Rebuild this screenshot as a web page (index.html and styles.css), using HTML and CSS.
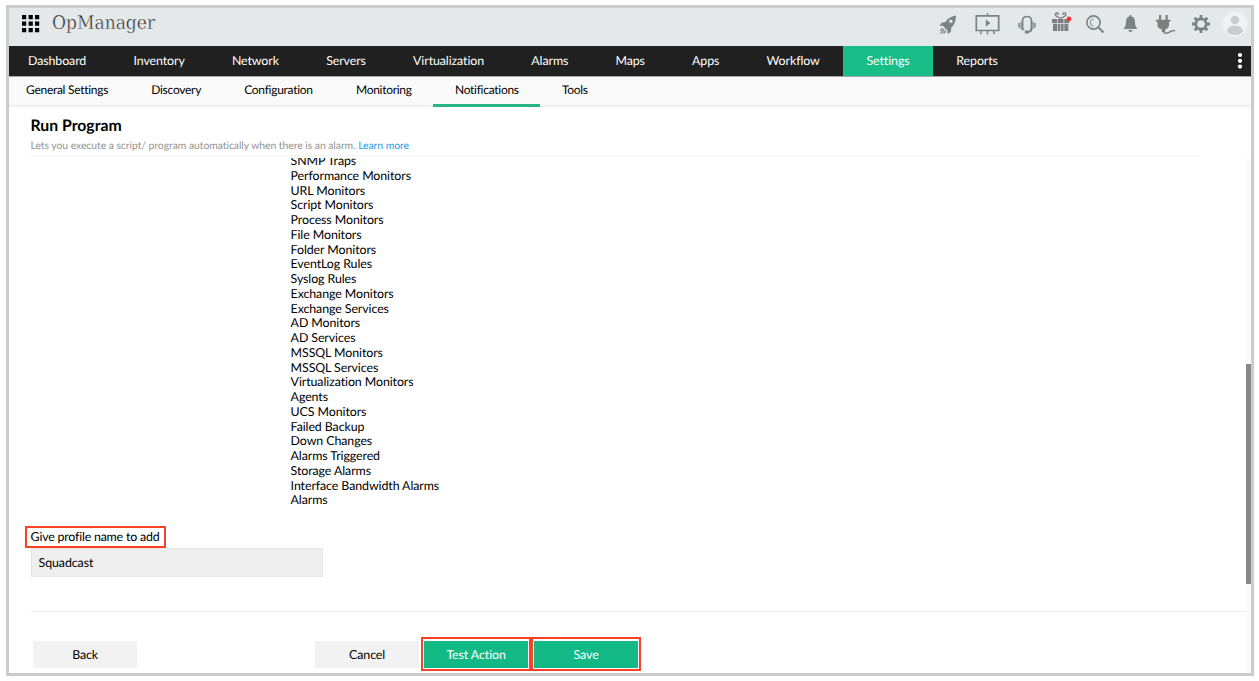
FILE: index.html
```html
<!DOCTYPE html>
<html lang="en">
<head>
<meta charset="utf-8">
<title>OpManager - Run Program</title>
<link rel="stylesheet" href="styles.css">
</head>
<body>
<div class="frame">
  <header class="topbar">
    <svg class="grid-icon" width="18" height="18" viewBox="0 0 18 18"><path d="M0 0h4.200v4.200H0zM6.600 0h4.200v4.200H6.600zM13 0h4.200v4.200H13zM0 6.500h4.200v4.200H0zM6.600 6.500h4.200v4.200H6.600zM13 6.500h4.200v4.200H13zM0 13h4.200v4.200H0zM6.600 13h4.200v4.200H6.600zM13 13h4.200v4.200H13z"/></svg>
    <span class="brand">OpManager</span>
    <div class="tools">
      <svg class="ic rocket" width="18" height="20" viewBox="0 0 18 20"><path fill="#7d8385" d="M17 0.500C12.500 1 8.500 3.500 6.500 7L2.500 7.800 0.500 11l3.300-.2 4.800 5-.1 3.200 3.300-2 .6-4.500C15.500 10 17 5.500 17 .5z"/><circle cx="11.800" cy="6.300" r="1.700" fill="#e5e8e9"/><path fill="none" stroke="#7d8385" stroke-width="1.300" d="M4 13.200l-2.800 2.600M5.500 14.500L1.500 18.500M7 16l-2.600 2.500"/></svg>
      <svg class="ic board" width="25" height="23" viewBox="0 0 25 23"><g fill="none" stroke="#7d8385"><path stroke-width="1.700" d="M1.300 2.900h22.400v14.600H1.300z"/><path stroke-width="1.500" d="M12.500 0v2M6.500 18l-1 3M12.500 18v3.500M18.500 18l1 3"/></g><path fill="#7d8385" d="M10.800 6.500l4.500 3.600-4.500 3.600z"/></svg>
      <svg class="ic headset" width="18" height="20" viewBox="0 0 18 20"><g fill="none" stroke="#7d8385" stroke-width="1.700"><path d="M6.200 14.500H4.600V5.500c0-2.700 1.700-4 4.400-4s4.400 1.300 4.400 4v9h-1.600M13.400 14.500c0 1.600-1.300 2.300-3.400 2.300"/><path stroke-width="1.500" d="M1 8v4.500M17 8v4.500"/><path stroke-width="1.200" d="M3 6.500v7.500M15 6.500v7.500"/></g><rect x="6.800" y="15.600" width="4" height="2.800" rx="1" fill="#7d8385"/></svg>
      <svg class="ic gift" width="20" height="21" viewBox="0 0 20 21"><g fill="#7d7f80"><path d="M0 7h5v4H0zM5.700 7h5.900v4H5.700zM12.300 7h5v4h-5zM1 11.700h4v7.300H1zM5.700 11.700h2.600v7.300H5.700zM9 11.700h2.600v7.300H9zM12.300 11.700h4v7.300h-4z"/></g><path fill="none" stroke="#7d7f80" stroke-width="1.500" d="M8.600 6.200C6 5.200 2.700 4 3.500 1.900 4.400.3 6.500 1 6.200 2.800M8.600 6.200c2.600-1 5.900-2.200 5.100-4.300-.9-1.600-3-.9-2.700.9"/><circle cx="16.900" cy="7" r="2.400" fill="#fa3638"/></svg>
      <svg class="ic search" width="19" height="19" viewBox="0 0 19 19"><g fill="none" stroke="#7d8385"><circle cx="7.500" cy="7.500" r="6.600" stroke-width="1.600"/><path stroke-width="1" d="M7.500 3.600a4 4 0 0 0 0 7.800"/><path stroke-width="2" d="M12.500 12.500l5 5"/></g></svg>
      <svg class="ic bell" width="15" height="18" viewBox="0 0 15 18"><path fill="#7d8385" d="M7.500 0c-.8 0-1.200.6-1.200 1.500C3.700 2.300 3 4.500 3 7c0 3.300-.8 5-2.700 7h14.400C12.800 12 12 10.300 12 7c0-2.500-.7-4.700-3.300-5.500C8.700.6 8.300 0 7.500 0zM5.500 15h4c0 1.300-.8 2-2 2s-2-.7-2-2z"/></svg>
      <svg class="ic plug" width="20" height="20" viewBox="0 0 20 20"><path fill="#7d7f7d" d="M0 4.800h14.500v2H13v3.500c0 2-1.700 3.700-3.800 4.200V17H5.800v-2.500C3.500 14 1.500 12.300 1.500 10.300V6.800H0zM3 0h2.200v5H3zM9.500 0h2.200v5H9.500z"/><path fill="none" stroke="#7d8385" stroke-width="1.600" d="M7.500 16c.5 2.700 3.300 2.700 5.500 1.300s4-2.600 6-1.300"/></svg>
      <svg class="ic gear" width="18" height="18" viewBox="0 0 18 18"><circle cx="9" cy="9" r="5.200" fill="none" stroke="#7d8385" stroke-width="2.700"/><path stroke="#7d8385" stroke-width="2.800" d="M9 0v3.200M9 14.800V18M0 9h3.200M14.800 9H18M2.640 2.640L4.900 4.900M13.100 13.100l2.260 2.260M2.640 15.360L4.900 13.100M13.100 4.900l2.260-2.260"/></svg>
      <svg class="ic user" width="26" height="26" viewBox="0 0 26 26"><circle cx="13" cy="13" r="12.500" fill="#f1f2f2"/><circle cx="13" cy="9" r="4.300" fill="#cbcccd"/><path fill="#cbcccd" d="M5 20.500c0-4 3-5.800 8-5.800s8 1.800 8 5.800c-2 2.600-5 3.500-8 3.500s-6-.9-8-3.500z"/></svg>
    </div>
  </header>
  <nav class="mainnav">
    <a>Dashboard</a><a>Inventory</a><a>Network</a><a>Servers</a><a>Virtualization</a><a>Alarms</a><a>Maps</a><a>Apps</a><a>Workflow</a><a class="active">Settings</a><a>Reports</a>
    <svg class="more" width="6" height="18" viewBox="0 0 6 18"><g fill="#fff"><circle cx="3" cy="3" r="2.100"/><circle cx="3" cy="8.800" r="2.100"/><circle cx="3" cy="14.600" r="2.100"/></g></svg>
  </nav>
  <nav class="subnav">
    <a>General Settings</a><a>Discovery</a><a>Configuration</a><a>Monitoring</a><a class="active">Notifications</a><a>Tools</a>
  </nav>
  <div class="heading">
    <h1>Run Program</h1>
    <p>Lets you execute a script/ program automatically when there is an alarm. <a>Learn more</a></p>
  </div>
  <main class="scroller">
    <div class="content">
      <ul class="monitors">
        <li>SNMP Traps</li><li>Performance Monitors</li><li>URL Monitors</li><li>Script Monitors</li><li>Process Monitors</li><li>File Monitors</li><li>Folder Monitors</li><li>EventLog Rules</li><li>Syslog Rules</li><li>Exchange Monitors</li><li>Exchange Services</li><li>AD Monitors</li><li>AD Services</li><li>MSSQL Monitors</li><li>MSSQL Services</li><li>Virtualization Monitors</li><li>Agents</li><li>UCS Monitors</li><li>Failed Backup</li><li>Down Changes</li><li>Alarms Triggered</li><li>Storage Alarms</li><li>Interface Bandwidth Alarms</li><li>Alarms</li>
      </ul>
      <div class="label">Give profile name to add</div>
      <div class="field">Squadcast</div>
      <div class="actions">
        <span class="btn back">Back</span>
        <span class="btn cancel">Cancel</span>
        <span class="mark test"><span class="btn primary">Test Action</span></span>
        <span class="mark save"><span class="btn primary">Save</span></span>
      </div>
    </div>
    <div class="track"><div class="thumb"></div></div>
  </main>
</div>
</body>
</html>
```
FILE: styles.css
```css
* { box-sizing: border-box; }
body { margin: 0; padding: 5px 5px 5px 6px; height: 681px; overflow: hidden; background: #fff; color: #000; font: 12.4px/15px Lato, sans-serif; letter-spacing: -0.09px; text-rendering: geometricPrecision; }
.frame { width: 1248px; height: 671px; border: 3px solid #ccc; display: flex; flex-direction: column; background: #fff; }
.topbar { height: 38px; flex: none; background: #e5e8e9; display: flex; align-items: flex-start; }
.grid-icon { margin: 7px 0 0 13px; }
.brand { margin: 2px 0 0 12px; font: 19px/26px "DejaVu Serif", serif; font-stretch: condensed; letter-spacing: 0; color: #222; -webkit-text-stroke: 0.4px #e5e8e9; white-space: nowrap; }
.tools { margin-left: auto; display: flex; align-items: flex-start; }
.ic { flex: none; }
.rocket { margin: 7px 18px 0 0; }
.board { margin: 5px 18px 0 0; }
.headset { margin: 7px 16px 0 0; }
.gift { margin: 4px 14px 0 0; }
.search { margin: 7px 18px 0 0; }
.bell { margin: 7px 18px 0 0; }
.plug { margin: 7px 16px 0 0; }
.gear { margin: 7px 12px 0 0; }
.user { margin: 3px 3px 0 0; }
.mainnav { height: 30px; flex: none; background: #202020; display: flex; color: #fff; }
.mainnav a { padding: 0 23.600px; line-height: 30px; }
.mainnav a:first-child { padding-left: 19px; }
.mainnav .active { background: #18bd87; padding: 0 23.200px; }
.more { margin: 6px 8px 0 auto; }
.subnav { height: 31px; flex: none; background: #fafafa; display: flex; border-top: 1px solid #a8a8a8; box-shadow: inset 0 -3px 2px -1px #efefef; font-size: 12px; letter-spacing: -0.28px; }
.subnav a { padding: 0 21.600px; line-height: 26px; height: 30px; }
.subnav a:first-child { padding-left: 17px; }
.subnav .active { border-bottom: 3px solid #27b583; }
.heading { height: 50px; flex: none; margin: 0 51px 0 21.500px; border-bottom: 2px solid #f7f7f7; }
h1 { margin: 9px 0 0; font-size: 15.800px; line-height: 20px; font-weight: 700; letter-spacing: 0; color: #000; }
.heading p { margin: 4px 0 0; font-size: 10.400px; line-height: 13px; letter-spacing: -0.05px; color: #949494; }
.heading p a { color: #239ee8; }
.scroller { flex: 1; min-height: 0; display: flex; overflow: hidden; margin-top: 1px; }
.content { flex: 1; margin-left: 21.600px; min-width: 0; }
.monitors { list-style: none; margin: -4px 0 0 260px; padding: 0; line-height: 14.750px; }
.label { width: 141px; height: 22px; margin: 18px 0 0 -6px; border: 2px solid #fc4226; padding-left: 4px; line-height: 18px; letter-spacing: -0.2px; white-space: nowrap; }
.field { width: 292px; height: 29px; border: 1px solid #e4e4e4; background: #efefef; padding-left: 7px; line-height: 27px; }
.actions { margin-top: 34px; border-top: 1px solid #eee; display: flex; height: 62px; padding: 25px 0 0 2.500px; }
.btn { display: block; width: 104px; height: 27px; margin-top: 3.500px; background: #f2f2f2; text-align: center; line-height: 27px; flex: none; }
.cancel { margin-left: 178px; }
.mark { flex: none; width: 110px; height: 34px; border: 2px solid #fc4226; margin-top: 0; }
.mark .btn { margin: 1.500px 0 0 1px; width: 104px; }
.test { margin-left: 2px; }
.primary { background: #12b985; color: #fff; }
.track { width: 6px; margin-right: -1px; background: #fafafa; }
.thumb { width: 6px; height: 220px; margin-top: 206px; background: #888; }
```
